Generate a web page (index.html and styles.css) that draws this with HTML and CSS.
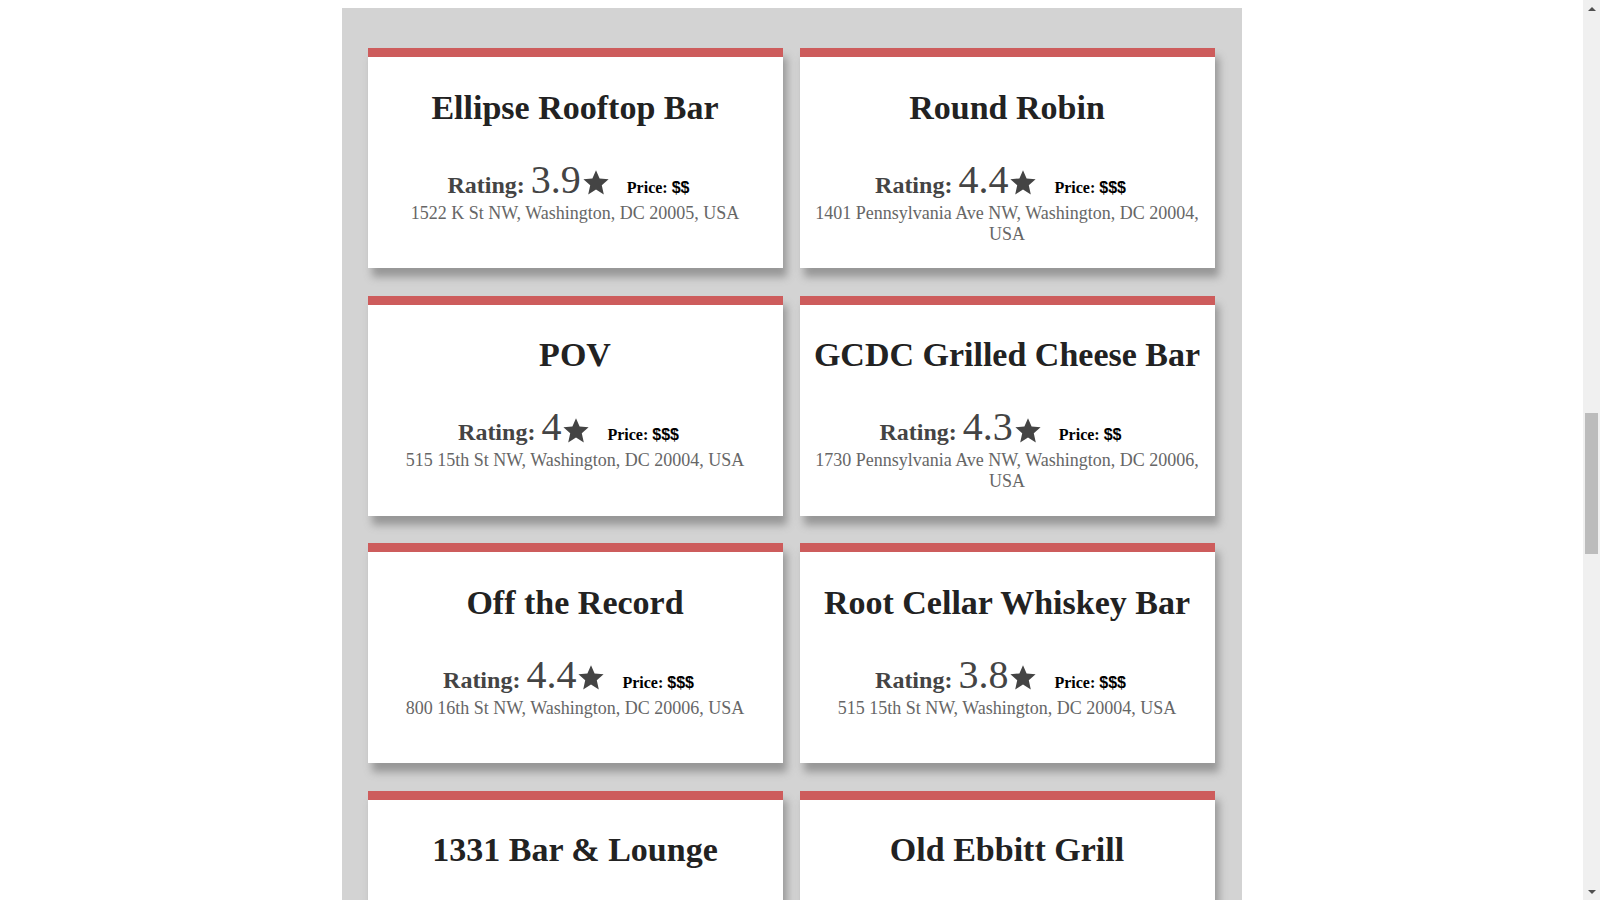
FILE: index.html
```html
<!DOCTYPE html>
<html>
<head>
<meta charset="utf-8">
<title>Bars near the White House</title>
<link rel="stylesheet" href="styles.css">
</head>
<body>
<main class="list">
  <article class="card">
    <h2 class="name">Ellipse Rooftop Bar</h2>
    <div class="rating-line"><span class="label">Rating:</span> <span class="score">3.9</span><svg class="star" viewBox="0 0 26 25"><polygon points="13,0.3 16.6,8.4 25.6,9.3 18.8,15.2 20.8,24.4 13,19.6 5.2,24.4 7.2,15.2 0.4,9.3 9.4,8.4"/></svg><span class="price"><span class="price-label">Price:</span> <span class="price-value">$$</span></span></div>
    <div class="address">1522 K St NW, Washington, DC 20005, USA</div>
  </article>
  <article class="card">
    <h2 class="name">Round Robin</h2>
    <div class="rating-line"><span class="label">Rating:</span> <span class="score">4.4</span><svg class="star" viewBox="0 0 26 25"><polygon points="13,0.3 16.6,8.4 25.6,9.3 18.8,15.2 20.8,24.4 13,19.6 5.2,24.4 7.2,15.2 0.4,9.3 9.4,8.4"/></svg><span class="price"><span class="price-label">Price:</span> <span class="price-value">$$$</span></span></div>
    <div class="address">1401 Pennsylvania Ave NW, Washington, DC 20004, USA</div>
  </article>
  <article class="card">
    <h2 class="name">POV</h2>
    <div class="rating-line"><span class="label">Rating:</span> <span class="score">4</span><svg class="star" viewBox="0 0 26 25"><polygon points="13,0.3 16.6,8.4 25.6,9.3 18.8,15.2 20.8,24.4 13,19.6 5.2,24.4 7.2,15.2 0.4,9.3 9.4,8.4"/></svg><span class="price"><span class="price-label">Price:</span> <span class="price-value">$$$</span></span></div>
    <div class="address">515 15th St NW, Washington, DC 20004, USA</div>
  </article>
  <article class="card">
    <h2 class="name">GCDC Grilled Cheese Bar</h2>
    <div class="rating-line"><span class="label">Rating:</span> <span class="score">4.3</span><svg class="star" viewBox="0 0 26 25"><polygon points="13,0.3 16.6,8.4 25.6,9.3 18.8,15.2 20.8,24.4 13,19.6 5.2,24.4 7.2,15.2 0.4,9.3 9.4,8.4"/></svg><span class="price"><span class="price-label">Price:</span> <span class="price-value">$$</span></span></div>
    <div class="address">1730 Pennsylvania Ave NW, Washington, DC 20006, USA</div>
  </article>
  <article class="card">
    <h2 class="name">Off the Record</h2>
    <div class="rating-line"><span class="label">Rating:</span> <span class="score">4.4</span><svg class="star" viewBox="0 0 26 25"><polygon points="13,0.3 16.6,8.4 25.6,9.3 18.8,15.2 20.8,24.4 13,19.6 5.2,24.4 7.2,15.2 0.4,9.3 9.4,8.4"/></svg><span class="price"><span class="price-label">Price:</span> <span class="price-value">$$$</span></span></div>
    <div class="address">800 16th St NW, Washington, DC 20006, USA</div>
  </article>
  <article class="card">
    <h2 class="name">Root Cellar Whiskey Bar</h2>
    <div class="rating-line"><span class="label">Rating:</span> <span class="score">3.8</span><svg class="star" viewBox="0 0 26 25"><polygon points="13,0.3 16.6,8.4 25.6,9.3 18.8,15.2 20.8,24.4 13,19.6 5.2,24.4 7.2,15.2 0.4,9.3 9.4,8.4"/></svg><span class="price"><span class="price-label">Price:</span> <span class="price-value">$$$</span></span></div>
    <div class="address">515 15th St NW, Washington, DC 20004, USA</div>
  </article>
  <article class="card">
    <h2 class="name">1331 Bar &amp; Lounge</h2>
    <div class="rating-line"><span class="label">Rating:</span> <span class="score">4.2</span><svg class="star" viewBox="0 0 26 25"><polygon points="13,0.3 16.6,8.4 25.6,9.3 18.8,15.2 20.8,24.4 13,19.6 5.2,24.4 7.2,15.2 0.4,9.3 9.4,8.4"/></svg><span class="price"><span class="price-label">Price:</span> <span class="price-value">$$$</span></span></div>
    <div class="address">1331 Pennsylvania Ave NW, Washington, DC 20004, USA</div>
  </article>
  <article class="card">
    <h2 class="name">Old Ebbitt Grill</h2>
    <div class="rating-line"><span class="label">Rating:</span> <span class="score">4.6</span><svg class="star" viewBox="0 0 26 25"><polygon points="13,0.3 16.6,8.4 25.6,9.3 18.8,15.2 20.8,24.4 13,19.6 5.2,24.4 7.2,15.2 0.4,9.3 9.4,8.4"/></svg><span class="price"><span class="price-label">Price:</span> <span class="price-value">$$</span></span></div>
    <div class="address">675 15th St NW, Washington, DC 20005, USA</div>
  </article>
</main>
<aside class="scrollbar" aria-hidden="true">
  <div class="sb-button"><svg class="sb-arrow" viewBox="0 0 8 4"><polygon points="4,0 8,4 0,4"/></svg></div>
  <div class="sb-track"><div class="sb-thumb"></div></div>
  <div class="sb-button"><svg class="sb-arrow" viewBox="0 0 8 4"><polygon points="0,0 8,0 4,4"/></svg></div>
</aside>
</body>
</html>
```

FILE: styles.css
```css
body {
  margin: 8px 25px 8px 8px;
  background: #ffffff;
  font-family: "Liberation Serif", "Times New Roman", serif;
}

.list {
  width: 900px;
  box-sizing: border-box;
  margin: 0 auto;
  padding: 40px 27px 40px 26px;
  background: #d3d3d3;
  display: grid;
  grid-template-columns: 415px 415px;
  column-gap: 17px;
  row-gap: 27.67px;
}

.card {
  height: 220px;
  box-sizing: border-box;
  background: #ffffff;
  border-top: 9px solid #cd5c5c;
  box-shadow: 4px 9px 8px #979797;
  padding: 31.5px 10px 0;
  text-align: center;
}

.name {
  margin: 0 0 29px;
  font-size: 34px;
  font-weight: bold;
  line-height: normal;
  color: #222222;
}

.rating-line {
  font-size: 24px;
  line-height: normal;
  color: #444444;
  white-space: nowrap;
}

.label {
  font-weight: bold;
}

.score {
  font-size: 40px;
}

.star {
  width: 26px;
  height: 25px;
  margin-left: 2px;
  vertical-align: -2.5px;
  fill: #444444;
}

.price {
  margin-left: 18px;
  margin-right: 13px;
  font-size: 16px;
  color: #000000;
}

.price-label {
  font-weight: bold;
}

.price-value {
  font-family: "Liberation Sans", Arial, sans-serif;
  font-weight: bold;
}

.address {
  font-size: 18px;
  line-height: normal;
  color: #666666;
}

/* window scrollbar, drawn over the right edge of the viewport */
.scrollbar {
  position: fixed;
  top: 0;
  right: 0;
  width: 17px;
  height: 100vh;
  background: #f0f0f0;
  display: flex;
  flex-direction: column;
}

.sb-button {
  height: 17px;
  display: flex;
  align-items: center;
  justify-content: center;
}

.sb-arrow {
  width: 8px;
  height: 4px;
  fill: #505050;
}

.sb-track {
  flex: 1;
  padding: 0 2px;
}

.sb-thumb {
  margin-top: 396px;
  height: 141px;
  background: #bcbcbc;
}
```
